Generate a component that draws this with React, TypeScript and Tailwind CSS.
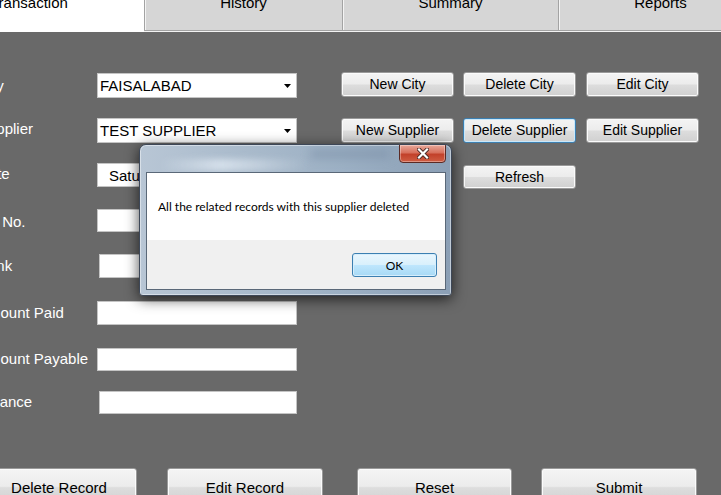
import React from "react";

const btnBase =
  "flex items-center justify-center rounded-[3px] border text-black bg-[linear-gradient(180deg,#f4f4f4_0%,#ececec_48%,#dddddd_52%,#d0d0d0_100%)]";

function WinButton({
  label,
  className = "",
  focused = false,
  text = "text-[14px]",
}: {
  label: string;
  className?: string;
  focused?: boolean;
  text?: string;
}) {
  return (
    <div
      className={`${btnBase} ${
        focused
          ? "border-[#3c7fb1] shadow-[inset_0_0_0_1px_#c8e8fb]"
          : "border-[#9a9a9a] shadow-[inset_0_0_0_1px_#fbfbfb]"
      } ${text} leading-[17px] ${className}`}
    >
      {label}
    </div>
  );
}

function Arrow() {
  return (
    <svg width="7" height="4" viewBox="0 0 7 4" className="block">
      <polygon points="0,0 7,0 3.5,4" fill="#000" />
    </svg>
  );
}

function Row({
  label,
  mt,
  h,
  labelShift = "",
  inputClass = "",
  children,
}: {
  label: string;
  mt: string;
  h: string;
  labelShift?: string;
  inputClass?: string;
  children?: React.ReactNode;
}) {
  return (
    <div className={`flex items-center ${mt} ${h}`}>
      <div
        className={`w-[119px] shrink-0 text-white text-[15px] leading-[17px] whitespace-nowrap overflow-hidden ${labelShift}`}
      >
        {label}
      </div>
      <div
        className={`h-full bg-white border border-[#c4c4c4] flex items-center text-[15px] leading-[17px] text-black ${inputClass}`}
      >
        {children}
      </div>
    </div>
  );
}

export default function App() {
  return (
    <div className="w-[721px] h-[495px] overflow-hidden relative bg-[#696969] font-['Liberation_Sans',Arial,sans-serif]">
      {/* Tab strip */}
      <div className="flex h-[32px] bg-[#f3f3f3] overflow-hidden">
        <div className="w-[144px] h-[32px] shrink-0 bg-white overflow-hidden">
          <div className="-ml-[10px] -mt-[6px] text-[15px] leading-[17px] text-black whitespace-nowrap">
            Transaction
          </div>
        </div>
        {[
          { l: "History", w: "w-[198px]" },
          { l: "Summary", w: "w-[216px]" },
          { l: "Reports", w: "w-[204px]" },
        ].map((t) => (
          <div
            key={t.l}
            className={`${t.w} shrink-0 h-[31px] bg-[#d6d6d6] border-l border-b border-[#a3a3a3] shadow-[inset_1px_0_0_#f4f4f4] flex justify-center overflow-hidden`}
          >
            <div className="-mt-[6px] text-[15px] leading-[17px] text-black whitespace-nowrap">
              {t.l}
            </div>
          </div>
        ))}
      </div>

      {/* Form area */}
      <div className="flex">
        <div className="-ml-[22px] w-[319px] shrink-0 flex flex-col">
          <Row label="City" mt="mt-[41px]" h="h-[25px]" inputClass="w-[200px] pl-[2px] pr-[5px] justify-between">
            <span>FAISALABAD</span>
            <Arrow />
          </Row>
          <Row label="Supplier" mt="mt-[20px]" h="h-[25px]" labelShift="mb-[4px]" inputClass="w-[200px] pl-[2px] pr-[5px] justify-between">
            <span>TEST SUPPLIER</span>
            <Arrow />
          </Row>
          <Row label="Date" mt="mt-[20px]" h="h-[24px]" labelShift="mb-[4px]" inputClass="w-[200px] pl-[11px] overflow-hidden whitespace-nowrap">
            <span>Saturday  ,  January  12, 2013</span>
          </Row>
          <Row label="Bill No." mt="mt-[22px]" h="h-[23px]" labelShift="mt-[2px]" inputClass="w-[200px]" />
          <Row label="Bank" mt="mt-[22px]" h="h-[24px]" labelShift="mb-[2px]" inputClass="w-[198px] ml-[2px]" />
          <Row label="Amount Paid" mt="mt-[23px]" h="h-[24px]" labelShift="mb-[2px]" inputClass="w-[200px]" />
          <Row label="Amount Payable" mt="mt-[23px]" h="h-[23px]" labelShift="mb-[2px]" inputClass="w-[200px]" />
          <Row label="Balance" mt="mt-[20px]" h="h-[23px]" labelShift="mb-[2px]" inputClass="w-[198px] ml-[2px]" />
        </div>

        <div className="ml-[44px] mt-[40px] flex flex-col shrink-0">
          <div className="flex h-[25px]">
            <WinButton label="New City" className="w-[113px]" />
            <WinButton label="Delete City" className="w-[113px] ml-[9px]" />
            <WinButton label="Edit City" className="w-[113px] ml-[10px]" />
          </div>
          <div className="flex h-[25px] mt-[21px]">
            <WinButton label="New Supplier" className="w-[113px]" />
            <WinButton label="Delete Supplier" focused className="w-[113px] ml-[9px]" />
            <WinButton label="Edit Supplier" className="w-[113px] ml-[10px]" />
          </div>
          <div className="flex h-[24px] mt-[22px]">
            <WinButton label="Refresh" className="w-[113px] ml-[122px]" />
          </div>
        </div>
      </div>

      {/* Bottom buttons */}
      <div className="flex mt-[54px]">
        <WinButton label="Delete Record" text="text-[15px]" className="w-[156px] h-[38px] -ml-[19px] shrink-0" />
        <WinButton label="Edit Record" text="text-[15px]" className="w-[156px] h-[38px] ml-[30px] shrink-0" />
        <WinButton label="Reset" text="text-[15px]" className="w-[155px] h-[38px] ml-[34px] shrink-0" />
        <WinButton label="Submit" text="text-[15px]" className="w-[156px] h-[38px] ml-[29px] shrink-0" />
      </div>

      {/* Message box */}
      <div className="absolute left-[139px] top-[144px] w-[313px] h-[152px] rounded-t-[7px] rounded-b-[4px] border border-[#3d4757] shadow-[0_3px_14px_rgba(0,0,0,0.7)] bg-[linear-gradient(90deg,#b8c6d5_0%,#a9bacb_35%,#9cb0c4_65%,#8b9fb5_100%)] overflow-hidden">
        <div className="absolute inset-0 rounded-t-[6px] shadow-[inset_0_0_0_1px_rgba(255,255,255,0.45)]" />
        <div className="absolute left-[20px] top-[14px] w-[150px] h-[12px] bg-[linear-gradient(90deg,rgba(255,255,255,0)_0%,rgba(230,238,246,0.7)_40%,rgba(255,255,255,0)_100%)] blur-[3px]" />
        <div className="absolute left-[170px] top-[4px] w-[80px] h-[10px] bg-[rgba(120,140,165,0.45)] blur-[4px]" />
        {/* close button */}
        <div className="absolute left-[259px] -top-px w-[47px] h-[19px] rounded-b-[4px] border border-[#5b2a24] bg-[linear-gradient(180deg,#e9a99b_0%,#d7705c_45%,#c2412a_55%,#cf5d43_100%)] shadow-[inset_0_0_0_1px_rgba(255,255,255,0.35)] flex items-center justify-center">
          <svg width="12" height="11" viewBox="0 0 12 11">
            <path d="M2 1.5 L10 9.5 M10 1.5 L2 9.5" stroke="#4a2a26" strokeWidth="4" strokeLinecap="square" />
            <path d="M2 1.5 L10 9.5 M10 1.5 L2 9.5" stroke="#ffffff" strokeWidth="2.2" strokeLinecap="square" />
          </svg>
        </div>
        {/* client */}
        <div className="absolute left-[6px] top-[27px] right-[5px] bottom-[5px] border border-[#5a6878] bg-white flex flex-col">
          <div className="h-[67px] flex items-center pl-[11px] text-[12px] leading-[15px] text-black font-['Segoe_UI','Lato','Noto_Sans',sans-serif] whitespace-nowrap">
            All the related records with this supplier deleted
          </div>
          <div className="flex-1 bg-[#f0f0f0] flex justify-end items-start pt-[13px] pr-[8px]">
            <div className="w-[85px] h-[24px] rounded-[3px] border border-[#3c7fb1] shadow-[inset_0_0_0_1px_#d6eefc] bg-[linear-gradient(180deg,#eaf6fd_0%,#d9f0fc_48%,#bee6fd_52%,#a7d9f5_100%)] flex items-center justify-center text-[12px] leading-[15px] text-black font-['Segoe_UI','Lato','Noto_Sans',sans-serif]">
              OK
            </div>
          </div>
        </div>
      </div>
    </div>
  );
}
